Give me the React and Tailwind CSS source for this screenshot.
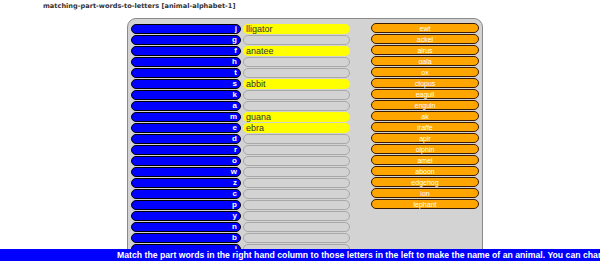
import React from 'react';

const letters = ['j', 'g', 'f', 'h', 't', 's', 'k', 'a', 'm', 'e', 'd', 'r', 'o', 'w', 'z', 'c', 'p', 'y', 'n', 'b', 'i'];

const answers = {
  j: 'lligator',
  f: 'anatee',
  s: 'abbit',
  m: 'guana',
  e: 'ebra',
};

const parts = ['ewt', 'ackel', 'alrus', 'oala', 'ox', 'ctopus', 'eagull', 'enguin', 'ak', 'iraffe', 'apir', 'olphin', 'amel', 'aboon', 'edgehog', 'ion', 'lephant'];

export default function App() {
  return (
    <div className="h-[261px] w-[600px] overflow-hidden bg-white flex flex-col font-['Liberation_Sans',Arial,sans-serif]">
      {/* Title */}
      <div className="h-[18px] pl-[43px] pt-[2px] text-[6.6px] font-bold text-[#333] font-['DejaVu_Sans',Verdana,sans-serif]">
        matching-part-words-to-letters [animal-alphabet-1]
      </div>

      {/* Board */}
      <div className="flex-1 min-h-0 overflow-hidden pl-[127px]">
        <div className="w-[356px] h-[300px] bg-[#d3d3d3] border border-[#8a8a8a] rounded-t-[9px] flex pt-[5px] pl-[3px]">
          {/* Letters + answers */}
          <div className="flex flex-col gap-[1px]">
            {letters.map((l) => (
              <div key={l} className="flex gap-[2px] h-[10px]">
                <div className="w-[110px] h-[10px] rounded-full bg-[#0000ff] border border-black flex items-center justify-end pr-[3px] text-[8px] font-bold text-white leading-none">
                  {l}
                </div>
                {answers[l] ? (
                  <div className="w-[107px] h-[10px] rounded-full bg-[#ffff00] flex items-center pl-[3px] text-[9px] text-[#333] leading-none">
                    {answers[l]}
                  </div>
                ) : (
                  <div className="w-[107px] h-[10px] rounded-full bg-[#d3d3d3] border border-[#a8a8a8]" />
                )}
              </div>
            ))}
          </div>

          {/* Part words */}
          <div className="ml-[21px] flex flex-col gap-[1px] -mt-[1px]">
            {parts.map((p) => (
              <div key={p} className="w-[108px] h-[10px] rounded-full bg-[#ffa500] border border-[#3a1a00] flex items-center justify-center text-[7px] text-white leading-none">
                {p}
              </div>
            ))}
          </div>
        </div>
      </div>

      {/* Instruction bar */}
      <div className="h-[12px] bg-[#0000ff] overflow-hidden whitespace-nowrap pl-[117px] text-[8.7px] font-bold text-white leading-[12px]">
        Match the part words in the right hand column to those letters in the left to make the name of an animal. You can change your answers at any time.
      </div>
    </div>
  );
}
